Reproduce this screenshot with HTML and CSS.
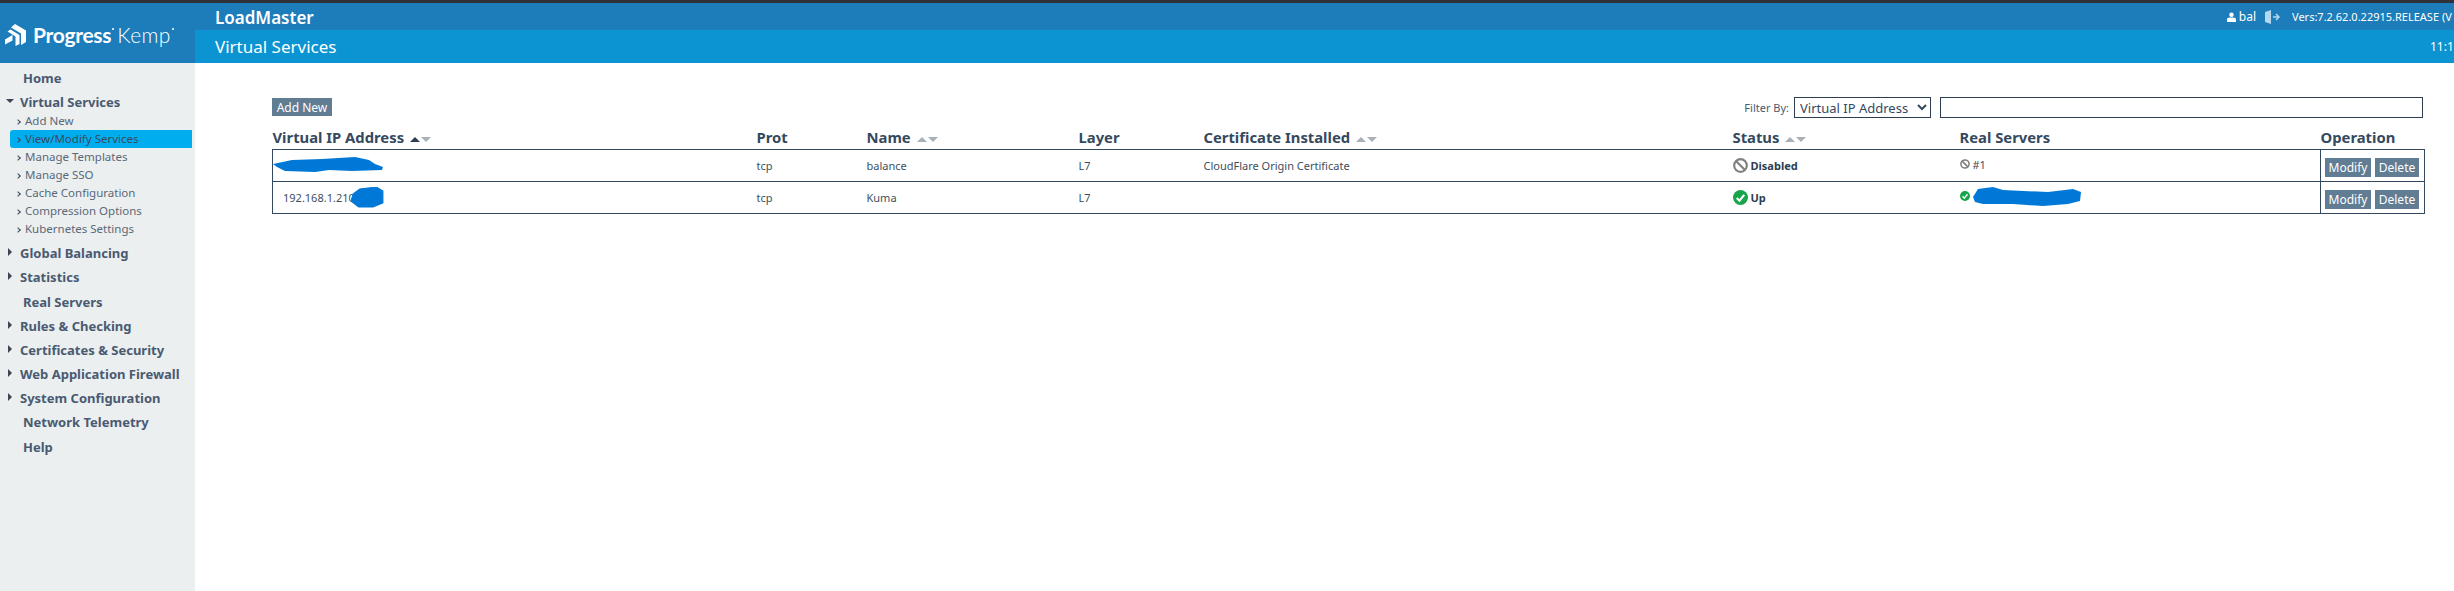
FILE: index.html
```html
<!DOCTYPE html>
<html lang="en">
<head>
<meta charset="utf-8">
<title>Virtual Services</title>
<link rel="stylesheet" href="styles.css">
</head>
<body>
<div class="topline"></div>
<div class="shell">
  <aside class="side">
    <div class="logo">
      <svg class="logo-mark" viewBox="0 0 22 22" width="22" height="22"><path d="M10 0 21 6.500V18l-5 3V9.500L6 3.500Z" fill="#fff"/><path d="M2.500 7.500 5.500 5.500 14.500 11V20l-4 2V12.500Z" fill="#fff"/><path d="M0 20.500V15.500L7.500 11V16.500Z" fill="#fff"/></svg>
      <span class="logo-a">Progress</span><span class="logo-b">Kemp</span>
    </div>
    <nav class="nav">
      <a class="top plain">Home</a>
      <a class="top"><i class="tri down"></i>Virtual Services</a>
      <ul class="sub">
        <li>Add New</li>
        <li class="on">View/Modify Services</li>
        <li>Manage Templates</li>
        <li>Manage SSO</li>
        <li>Cache Configuration</li>
        <li>Compression Options</li>
        <li>Kubernetes Settings</li>
      </ul>
      <a class="top"><i class="tri"></i>Global Balancing</a>
      <a class="top"><i class="tri"></i>Statistics</a>
      <a class="top plain gap">Real Servers</a>
      <a class="top"><i class="tri"></i>Rules &amp; Checking</a>
      <a class="top"><i class="tri"></i>Certificates &amp; Security</a>
      <a class="top"><i class="tri"></i>Web Application Firewall</a>
      <a class="top"><i class="tri"></i>System Configuration</a>
      <a class="top plain">Network Telemetry</a>
      <a class="top plain gap">Help</a>
    </nav>
  </aside>
  <main class="main">
    <header class="bar1">
      <span class="brand">LoadMaster</span>
      <span class="user">
        <svg viewBox="0 0 10 11" width="9" height="10"><circle cx="5" cy="3" r="2.500" fill="#fff"/><path d="M0 11V8.500Q0 6 3 6h4q3 0 3 2.500V11Z" fill="#fff"/></svg>
        <span class="uname">bal</span>
        <svg class="out" viewBox="0 0 15 14" width="15" height="14"><path d="M0 2 6 0v14L0 12Z" fill="#b5d8ef"/><path d="M8 7h6M11 4l3 3-3 3" fill="none" stroke="#b5d8ef" stroke-width="1.500"/></svg>
      </span>
      <span class="vers">Vers:7.2.62.0.22915.RELEASE (V</span>
    </header>
    <div class="bar2"><span class="title">Virtual Services</span><span class="clock">11:1</span></div>
    <div class="content">
      <div class="tools">
        <button class="btn add">Add New</button>
        <div class="filter">
          <label class="flabel">Filter By:</label>
          <select class="fsel"><option>Virtual IP Address</option></select>
          <input class="finp" type="text">
        </div>
      </div>
      <table class="grid">
        <colgroup>
          <col class="c1"><col class="c2"><col class="c3"><col class="c4"><col class="c5"><col class="c6"><col class="c7"><col class="c8">
        </colgroup>
        <thead>
          <tr>
            <th>Virtual IP Address <span class="sort"><b class="up dark"></b><b class="dn"></b></span></th>
            <th>Prot</th>
            <th>Name <span class="sort"><b class="up"></b><b class="dn"></b></span></th>
            <th>Layer</th>
            <th>Certificate Installed <span class="sort"><b class="up"></b><b class="dn"></b></span></th>
            <th>Status <span class="sort"><b class="up"></b><b class="dn"></b></span></th>
            <th>Real Servers</th>
            <th>Operation</th>
          </tr>
        </thead>
        <tbody>
          <tr>
            <td class="vip"><svg class="blot b1" viewBox="0 0 110 16" width="110" height="16"><path d="M0 7 19 3 49 2 82 0 96 3 102 7 110 10 109 13 79 14 56 13 42 15 12 14 4 10Z" fill="#0078d7"/></svg></td>
            <td>tcp</td><td>balance</td><td>L7</td><td>CloudFlare Origin Certificate</td>
            <td><span class="st"><svg viewBox="0 0 14 14" width="15" height="15"><circle cx="7" cy="7" r="5.900" fill="none" stroke="#808080" stroke-width="2"/><path d="M3 3l8 8" stroke="#808080" stroke-width="2"/></svg>Disabled</span></td>
            <td><span class="rs"><svg viewBox="0 0 14 14" width="10" height="10"><circle cx="7" cy="7" r="5.700" fill="none" stroke="#808080" stroke-width="2.200"/><path d="M3 3l8 8" stroke="#808080" stroke-width="2.200"/></svg>#1</span></td>
            <td class="ops"><button class="btn mod">Modify</button><button class="btn del">Delete</button></td>
          </tr>
          <tr>
            <td class="vip">192.168.1.210<svg class="blot b2" viewBox="0 0 30 21" width="33" height="21" preserveAspectRatio="none"><path d="M2 7 8 2 23 0 29 4 29 16 20 20 7 20 0 14Z" fill="#0078d7" stroke="#0078d7"/></svg></td>
            <td>tcp</td><td>Kuma</td><td>L7</td><td></td>
            <td><span class="st"><svg viewBox="0 0 14 14" width="15" height="15"><circle cx="7" cy="7" r="7" fill="#16a54a"/><path d="M3.500 7.500l2.500 2.500 4.500-5.500" fill="none" stroke="#fff" stroke-width="2"/></svg>Up</span></td>
            <td><span class="rs"><svg viewBox="0 0 14 14" width="10" height="10"><circle cx="7" cy="7" r="7" fill="#16a54a"/><path d="M3.500 7.500l2.500 2.500 4.500-5.500" fill="none" stroke="#fff" stroke-width="2"/></svg><svg class="b3" viewBox="0 0 108 19" width="108" height="19"><path d="M0 10 5 2 20 0 30 3 75 5 100 2 108 5 107 14 95 17 70 19 40 17 10 17 2 15Z" fill="#0078d7"/></svg></span></td>
            <td class="ops"><button class="btn mod">Modify</button><button class="btn del">Delete</button></td>
          </tr>
        </tbody>
      </table>
    </div>
  </main>
</div>
</body>
</html>
```
FILE: styles.css
```css
* { box-sizing: border-box; }
html, body { margin: 0; height: 100%; background: #fff; overflow: hidden; }
body { font-family: "Noto Sans", "Open Sans", sans-serif; color: #35495e; }
.topline { height: 3px; background: #2f3238; }
.shell { display: flex; height: 588px; }
.side { width: 195px; background: #ebeff0; flex: none; }
.logo { height: 60px; background: #1c7dba; display: flex; align-items: center; padding: 3px 0 0 5px; color: #fff; font-size: 21px; white-space: nowrap; font-family: "Lato", sans-serif; letter-spacing: -0.3px; }
.logo-mark { margin-right: 6px; }
.logo-a { font-weight: 700; margin-right: 6px; position: relative; }
.logo-b { font-weight: 300; position: relative; letter-spacing: 0.4px; }
.logo-a::after, .logo-b::after { content: ""; position: absolute; right: -3px; top: 6px; width: 2px; height: 2px; background: #fff; border-radius: 50%; }
.nav { display: flex; flex-direction: column; padding-top: 3px; }
.top { display: flex; align-items: center; height: 24px; flex: none; padding-left: 20px; font-size: 13px; font-weight: 700; color: #4a5a70; position: relative; white-space: nowrap; }
.top.plain { padding-left: 23px; }
.top.gap { margin-top: 1px; }
.tri { position: absolute; left: 8px; top: 7px; border-style: solid; border-width: 4.500px 0 4.500px 4px; border-color: transparent transparent transparent #3b4554; }
.tri.down { left: 6px; top: 9px; border-width: 4px 4px 0 4px; border-color: #3b4554 transparent transparent transparent; }
.sub { list-style: none; margin: -2px 0 3px; padding: 0 0 0 10px; }
.sub li { height: 18px; line-height: 18px; font-size: 11.500px; color: #5a6878; padding-left: 15px; position: relative; margin-right: 3px; white-space: nowrap; }
.sub li::before { content: ""; position: absolute; left: 6px; top: 8px; width: 3px; height: 3px; border-top: 1px solid #3b4554; border-right: 1px solid #3b4554; transform: rotate(45deg); }
.sub li.on { background: #00aeef; color: #3a4a5c; border-radius: 3px 0 0 3px; }
.main { flex: 1; min-width: 0; }
.bar1 { height: 27px; background: #1c7dba; display: flex; align-items: center; padding-left: 20px; color: #fff; white-space: nowrap; overflow: hidden; }
.brand { font-size: 17px; font-weight: 600; padding-top: 2px; }
.user { margin-left: auto; display: flex; align-items: center; gap: 3px; font-size: 12px; }
.out { margin-left: 6px; }
.vers { font-size: 11px; margin-left: 12px; width: 162px; flex: none; }
.bar2 { height: 33px; background: #0c93d2; display: flex; align-items: center; justify-content: space-between; padding-left: 20px; color: #fff; font-size: 17px; white-space: nowrap; overflow: hidden; }
.clock { font-size: 12px; width: 24px; flex: none; }
.content { padding: 35px 0 0 77px; width: 2229px; }
.tools { display: flex; justify-content: space-between; align-items: flex-start; height: 21px; }
.btn { border: 0; background: #607d94; color: #fff; font: 12px "Noto Sans", sans-serif; padding: 0; height: 19px; }
.add { width: 60px; height: 18px; }
.filter { display: flex; align-items: center; font-size: 11px; margin-top: -1px; }
.flabel { margin-right: 5px; color: #4a5a70; }
.fsel { width: 137px; height: 21px; border: 1px solid #2c3e50; background: #fff; font: 13px "Noto Sans", sans-serif; color: #35495e; border-radius: 0; padding: 0 0 0 1px; }
.finp { width: 483px; height: 21px; border: 1px solid #2c3e50; margin: 0 1px 0 9px; border-radius: 0; }
.grid { border-collapse: collapse; table-layout: fixed; width: 2152px; margin-top: 5px; }
.c1 { width: 484px; } .c2 { width: 110px; } .c3 { width: 212px; } .c4 { width: 125px; }
.c5 { width: 529px; } .c6 { width: 227px; } .c7 { width: 361px; } .c8 { width: 104px; }
th { text-align: left; font-size: 14.800px; font-weight: 700; color: #35495e; height: 25px; padding: 2px 0 0; white-space: nowrap; }
td { height: 32px; font-size: 11px; color: #3e4f60; padding: 0; border-top: 1px solid #35495e; border-bottom: 1px solid #35495e; white-space: nowrap; }
td:first-child { border-left: 1px solid #35495e; }
td:last-child { border-right: 1px solid #35495e; border-left: 1px solid #35495e; }
.vip { padding-left: 10px; position: relative; }
.sort { display: inline-flex; gap: 1px; vertical-align: middle; margin-left: 2px; }
.sort b { width: 0; height: 0; border-style: solid; }
.up { border-width: 0 5px 5px 5px; border-color: transparent transparent #a8b0b8 transparent; }
.up.dark { border-bottom-color: #2c3e50; }
.dn { border-width: 5px 5px 0 5px; border-color: #a8b0b8 transparent transparent transparent; }
.st { display: flex; align-items: center; gap: 3px; font-weight: 700; font-size: 11px; color: #2c3e50; }
.rs { display: flex; align-items: center; gap: 3px; margin-top: -2px; }
.ops { padding-left: 4px; }
.ops .btn { margin-right: 4px; margin-top: 5px; }
.mod { width: 46px; }
.del { width: 44px; }
.blot { position: absolute; }
.b1 { left: 0; top: 7px; }
.b2 { left: 78px; top: 5px; }
```
